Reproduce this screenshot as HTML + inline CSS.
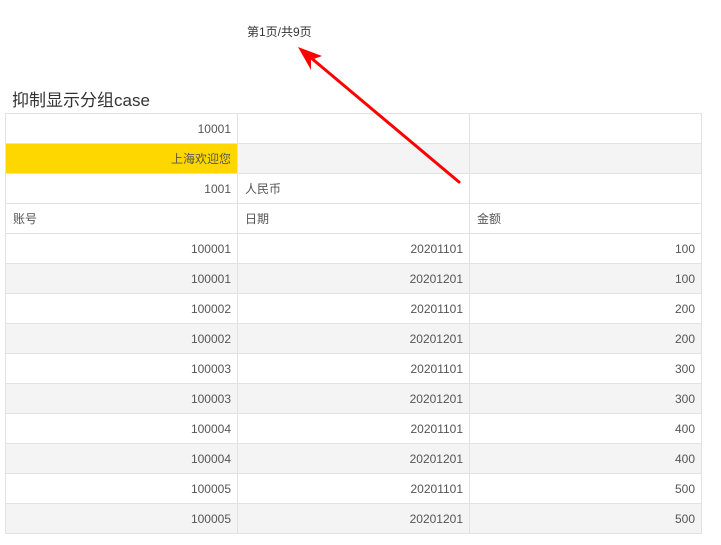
<!DOCTYPE html>
<html><head><meta charset="utf-8"><style>
body{margin:0;width:721px;height:545px;background:#fff;font-family:"Liberation Sans","Noto Sans CJK SC",sans-serif;position:relative;overflow:hidden}
.pg{position:absolute;left:247px;top:23px;font-size:12px;color:#333}
.t{position:absolute;left:12px;top:86px;font-size:17px;color:#333}
table{position:absolute;left:5px;top:113px;border-collapse:collapse;font-size:12px;color:#555;table-layout:fixed;width:696px}
td{border:1px solid #e2e2e2;height:30px;padding:0 6px 0 7px;width:232px;box-sizing:border-box}
.r{text-align:right}
.g td{background:#f4f4f4}
</style></head><body>
<div class="pg">第1页/共9页</div>
<div class="t">抑制显示分组case</div>
<table>
<tr><td class="r">10001</td><td></td><td></td></tr>
<tr class="g"><td class="r" style="background:#ffd700">上海欢迎您</td><td></td><td></td></tr>
<tr><td class="r">1001</td><td>人民币</td><td></td></tr>
<tr><td>账号</td><td>日期</td><td>金额</td></tr>
<tr><td class="r">100001</td><td class="r">20201101</td><td class="r">100</td></tr>
<tr class="g"><td class="r">100001</td><td class="r">20201201</td><td class="r">100</td></tr>
<tr><td class="r">100002</td><td class="r">20201101</td><td class="r">200</td></tr>
<tr class="g"><td class="r">100002</td><td class="r">20201201</td><td class="r">200</td></tr>
<tr><td class="r">100003</td><td class="r">20201101</td><td class="r">300</td></tr>
<tr class="g"><td class="r">100003</td><td class="r">20201201</td><td class="r">300</td></tr>
<tr><td class="r">100004</td><td class="r">20201101</td><td class="r">400</td></tr>
<tr class="g"><td class="r">100004</td><td class="r">20201201</td><td class="r">400</td></tr>
<tr><td class="r">100005</td><td class="r">20201101</td><td class="r">500</td></tr>
<tr class="g"><td class="r">100005</td><td class="r">20201201</td><td class="r">500</td></tr>
</table>
<svg width="721" height="545" style="position:absolute;left:0;top:0">
<line x1="459" y1="182" x2="310" y2="57" stroke="#f00" stroke-width="3" stroke-linecap="round"/>
<polygon points="298,47 322,56 311,60 311,70" fill="#f00"/>
</svg>
</body></html>
